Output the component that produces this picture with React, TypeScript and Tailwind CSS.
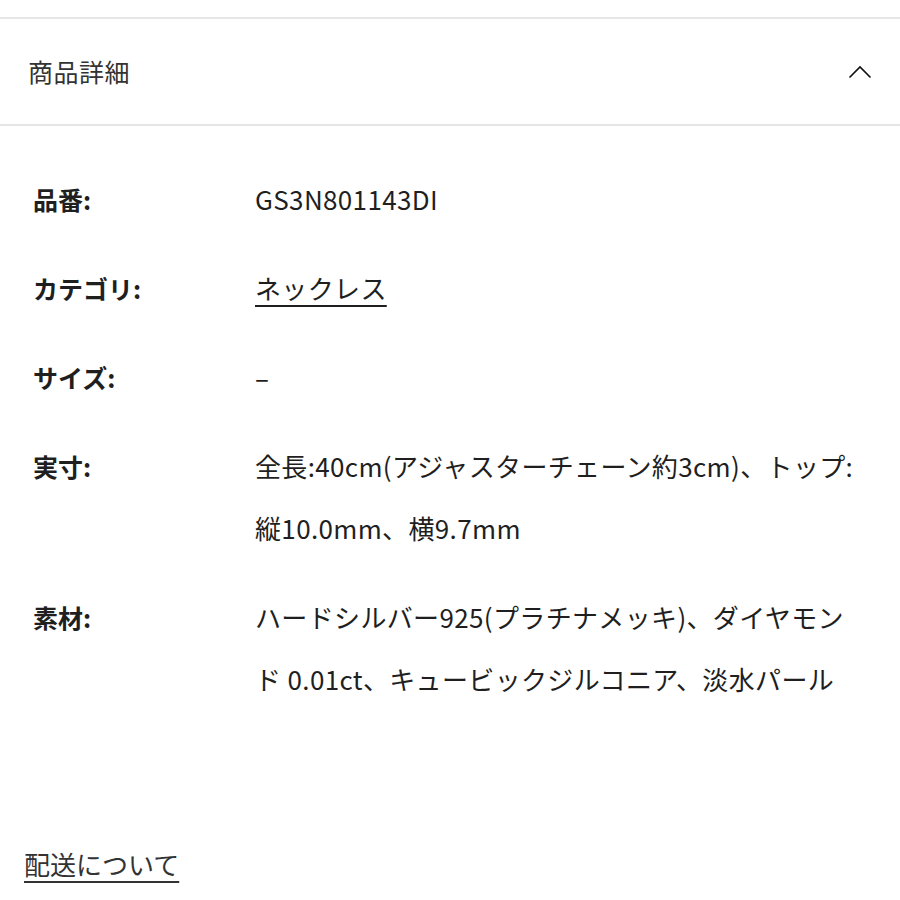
const rows: { label: string; lines: React.ReactNode[] }[] = [
  { label: "品番:", lines: ["GS3N801143DI"] },
  {
    label: "カテゴリ:",
    lines: [
      <a href="#" className="underline underline-offset-[6px] decoration-[2px]">
        ネックレス
      </a>,
    ],
  },
  { label: "サイズ:", lines: ["–"] },
  {
    label: "実寸:",
    lines: ["全長:40cm(アジャスターチェーン約3cm)、トップ:", "縦10.0mm、横9.7mm"],
  },
  {
    label: "素材:",
    lines: [
      "ハードシルバー925(プラチナメッキ)、ダイヤモン",
      "ド 0.01ct、キュービックジルコニア、淡水パール",
    ],
  },
];

const font = { fontFamily: '"Noto Sans CJK JP", sans-serif' };

export default function App() {
  return (
    <div className="w-[900px] h-[900px] bg-white text-[#1f1f1f] overflow-hidden" style={font}>
      {/* Accordion header */}
      <div className="mt-[17px] border-t-2 border-b-2 border-[#e6e6e6] h-[109px] flex items-center justify-between pl-[28px] pr-[28px]">
        <span className="text-[25px] text-[#333] tracking-[0.5px]">商品詳細</span>
        <svg width="24" height="14" viewBox="0 0 24 14" fill="none">
          <path d="M1.5 12.5 L12 2 L22.5 12.5" stroke="#111" strokeWidth="1.6" />
        </svg>
      </div>

      {/* Details */}
      <div className="pt-[42px] pl-[33px] flex flex-col gap-[27px]">
        {rows.map((r) => (
          <div key={r.label} className="flex">
            <div className="w-[222px] shrink-0 text-[25px] font-bold leading-[62px]">{r.label}</div>
            <div className="text-[26px] leading-[62px] whitespace-nowrap tracking-[0.35px]">
              {r.lines.map((l, i) => (
                <div key={i}>{l}</div>
              ))}
            </div>
          </div>
        ))}
      </div>

      <div className="mt-[134px] pl-[24px]">
        <a href="#" className="text-[26px] text-[#333] underline underline-offset-[6px] decoration-[2px]">
          配送について
        </a>
      </div>
    </div>
  );
}
